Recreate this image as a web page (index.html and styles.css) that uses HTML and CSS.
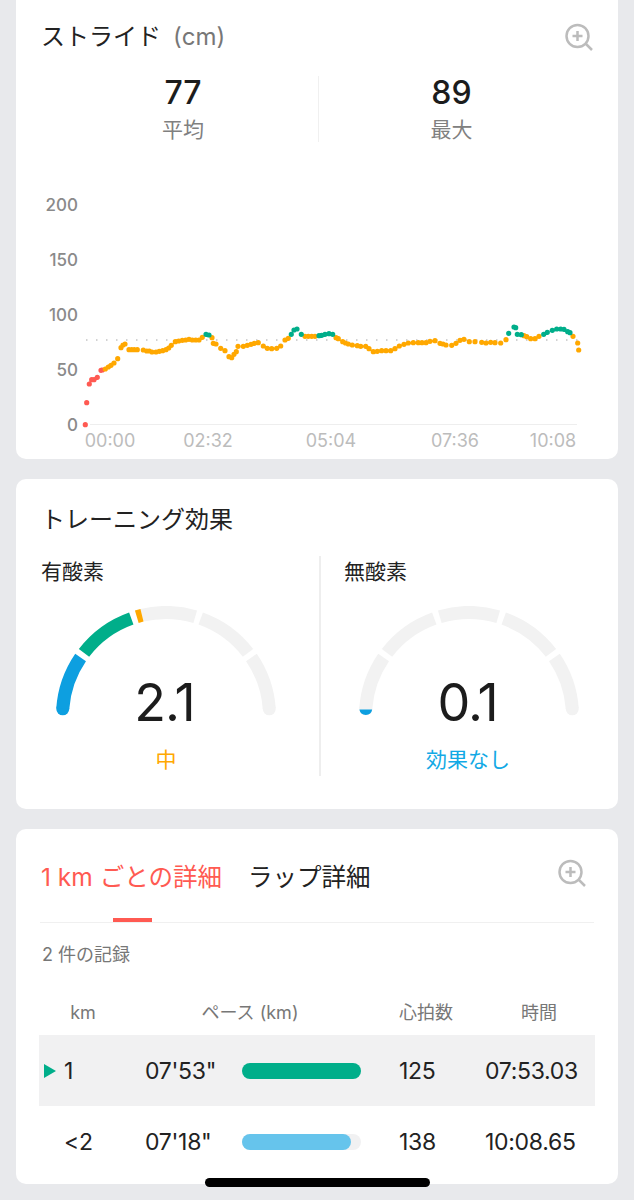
FILE: index.html
```html
<!DOCTYPE html>
<html lang="ja">
<head>
    <meta charset="UTF-8">
    <meta name="viewport" content="width=device-width, initial-scale=1.0">
    <title>ストライド</title>
    <link rel="stylesheet" href="styles.css">
</head>
<body>
    <div class="page">
        <section class="card card-stride">
            <div class="card-head">
                <h2 class="card-title">ストライド<span class="unit">(cm)</span></h2>
                <svg class="zoom-icon" viewBox="0 0 28 28"><circle cx="12.5" cy="13" r="11"/><path d="M7.5 13h10M12.5 8v10M21 21l6 6"/></svg>
            </div>
            <div class="stats">
                <div class="stat"><div class="stat-value">77</div><div class="stat-label">平均</div></div>
                <div class="stat stat-right"><div class="stat-value">89</div><div class="stat-label">最大</div></div>
            </div>
            <svg class="chart" viewBox="16 180 602 279">
                <g class="y-labels">
                    <text x="78" y="210">200</text>
                    <text x="78" y="265">150</text>
                    <text x="78" y="320">100</text>
                    <text x="78" y="375">50</text>
                    <text x="78" y="430">0</text>
                </g>
                <path class="axis" d="M90 423.5H577"/>
                <path class="avg" d="M86 339H578"/>
                <path class="dots red" d="M85.3 423.7h0M86.7 401.7h0M89.3 383h0M91.7 378.7h0M94 378.7h0M97.3 376.3h0M101 369.3h0M102.3 369h0"/>
                <path class="dots orange" d="M105.3 368h0M108.3 366h0M111 364.3h0M114 362h0M117.7 357.7h0M121 346.7h0M123 344h0M125 343h0M129 348.7h0M131.7 348.7h0M134.3 348.7h0M137.3 348.7h0M143.3 349h0M146.7 350h0M149.3 350h0M152 351h0M156 351h0M159.3 350.3h0M162.7 349.7h0M166 348.7h0M168.7 347h0M171.3 344.3h0M175.3 340.7h0M178.7 340h0M182.3 339.3h0M185.7 339h0M189 338.3h0M192.3 339h0M195.7 339h0M199 339h0M202.3 336.3h0M212 336.7h0M213.3 342.3h0M216 343h0M220.7 347.3h0M225 349.7h0M229 355.7h0M231.7 356.7h0M234 353.3h0M236.3 350.7h0M238 345.3h0M243.3 345.3h0M247.3 344.3h0M251 343.3h0M254.3 342.3h0M258.3 341.7h0M263.3 345h0M267.3 347.3h0M271.7 347.7h0M276.7 347.3h0M280.7 345h0M285 339h0M288.3 337.3h0M305 335.3h0M308.3 335.3h0M311.7 335.3h0M315 335.3h0M336 336.7h0M338.3 337.7h0M342.7 340.7h0M345.5 342h0M348.3 343h0M352.3 344h0M357.3 344.7h0M360.7 345.3h0M365.7 345.3h0M369 347.7h0M373.3 350.7h0M377.3 350.3h0M381.7 349.7h0M386 349.7h0M390.7 349.7h0M395 347.7h0M399.3 345h0M404 343.3h0M408.3 342h0M413.3 341.7h0M418.3 341.7h0M422 341.7h0M426 341.7h0M430 340.3h0M435 339.7h0M440 342.3h0M443 343h0M446 344h0M451.7 344.3h0M456 342.3h0M460 339.3h0M464 338.3h0M469.3 340.7h0M475 340.7h0M481.7 341.3h0M486 342h0M490.7 341.3h0M495 341.7h0M500.7 342h0M506 338.7h0M524 334.7h0M526.7 335.7h0M530.7 337.7h0M535 337.7h0M539 335.3h0M573 335.3h0M577.7 342h0M578.7 349h0"/>
                <path class="dots green" d="M206 333.3h0M209 334h0M291.3 333.3h0M294 329h0M297 328h0M301.3 333.3h0M319 334.7h0M321.7 334.3h0M325 333.3h0M329 332.7h0M332.7 333.3h0M508.7 332.3h0M514 326h0M515.7 326.7h0M517.3 333.3h0M521.3 333.7h0M543.7 333.3h0M547.3 331.3h0M552.3 329.3h0M556.7 328h0M560.7 328h0M564 328.3h0M567.7 330.7h0M570 331.7h0"/>
                <g class="x-labels">
                    <text x="110" y="446">00:00</text>
                    <text x="208" y="446">02:32</text>
                    <text x="331" y="446">05:04</text>
                    <text x="455" y="446">07:36</text>
                    <text x="553" y="446">10:08</text>
                </g>
            </svg>
        </section>

        <section class="card card-effect">
            <h2 class="card-title">トレーニング効果</h2>
            <div class="effects">
                <div class="effect">
                    <div class="effect-name">有酸素</div>
                    <div class="gauge">
                        <svg class="gauge-svg" viewBox="-110 -110 220 110">
                            <circle class="cap" cx="-103.25" cy="-7.22" r="6.5"/>
                            <path class="arc blue" d="M-103.25 -7.22A103.5 103.5 0 0 1 -85.4 -58.48"/>
                            <path class="arc green" d="M-82 -63.14A103.5 103.5 0 0 1 -34.72 -97.5"/>
                            <path class="arc track" d="M-24 -100.7A103.5 103.5 0 0 1 29.22 -99.29"/>
                            <path class="arc orange-arc" d="M-29.22 -99.29A103.5 103.5 0 0 1 -24 -100.7"/>
                            <path class="arc track" d="M34.72 -97.5A103.5 103.5 0 0 1 82 -63.14"/>
                            <path class="arc track" d="M85.4 -58.48A103.5 103.5 0 0 1 103.25 -7.22"/>
                            <circle class="cap-track" cx="103.25" cy="-7.22" r="6.5"/>
                        </svg>
                        <div class="gauge-value">2.1</div>
                    </div>
                    <div class="effect-level level-mid">中</div>
                </div>
                <div class="effect effect-right">
                    <div class="effect-name">無酸素</div>
                    <div class="gauge">
                        <svg class="gauge-svg" viewBox="-110 -110 220 110">
                            <circle class="cap-track" cx="-103.25" cy="-7.22" r="6.5"/>
                            <path class="arc track" d="M-103.25 -7.22A103.5 103.5 0 0 1 -85.4 -58.48"/>
                            <path class="arc track" d="M-82 -63.14A103.5 103.5 0 0 1 -34.72 -97.5"/>
                            <path class="arc track" d="M-29.22 -99.29A103.5 103.5 0 0 1 29.22 -99.29"/>
                            <path class="arc track" d="M34.72 -97.5A103.5 103.5 0 0 1 82 -63.14"/>
                            <path class="arc track" d="M85.4 -58.48A103.5 103.5 0 0 1 103.25 -7.22"/>
                            <circle class="cap-track" cx="103.25" cy="-7.22" r="6.5"/>
                            <path class="cap" d="M-109.6 -6.4A6.5 6.5 0 0 0 -96.8 -6.4Z"/>
                        </svg>
                        <div class="gauge-value">0.1</div>
                    </div>
                    <div class="effect-level level-none">効果なし</div>
                </div>
            </div>
        </section>

        <section class="card card-laps">
            <div class="tabs">
                <div class="tab tab-active">1 km ごとの詳細</div>
                <div class="tab">ラップ詳細</div>
                <svg class="zoom-icon" viewBox="0 0 28 28"><circle cx="12.5" cy="13" r="11"/><path d="M7.5 13h10M12.5 8v10M21 21l6 6"/></svg>
            </div>
            <div class="count">2 件の記録</div>
            <div class="table-head">
                <div>km</div>
                <div>ペース (km)</div>
                <div>心拍数</div>
                <div>時間</div>
            </div>
            <div class="lap lap-current">
                <div class="lap-km"><span class="marker"></span>1</div>
                <div>07'53"</div>
                <div class="bar"><div class="bar-fill bar-green" style="width: 100%"></div></div>
                <div>125</div>
                <div>07:53.03</div>
            </div>
            <div class="lap">
                <div class="lap-km">&lt;2</div>
                <div>07'18"</div>
                <div class="bar"><div class="bar-fill bar-blue" style="width: 92%"></div></div>
                <div>138</div>
                <div>10:08.65</div>
            </div>
        </section>
    </div>
    <div class="home-bar"></div>
</body>
</html>
```

FILE: styles.css
```css
* {
    box-sizing: border-box;
}

body {
    font-family: Inter, "Noto Sans CJK JP", sans-serif;
    background-color: #e8e9ec;
    color: #222;
    margin: 0;
    height: 1200px;
    overflow: hidden;
    position: relative;
}

.page {
    display: flex;
    flex-direction: column;
    gap: 20px;
    padding: 0 16px;
}

.card {
    background: white;
    border-radius: 10px;
}

.card-stride {
    margin-top: -10px;
    height: 469px;
    padding-top: 27px;
}

.card-effect {
    height: 330px;
    padding-top: 23px;
}

.card-laps {
    height: 355px;
    padding-top: 31px;
}

.card-head {
    display: flex;
    justify-content: space-between;
    align-items: center;
    padding: 0 25px;
    height: 40px;
}

.card-title {
    margin: 0;
    font-size: 24px;
    font-weight: 400;
    line-height: 36px;
    color: #222;
}

.card-effect .card-title {
    padding-left: 25px;
}

.unit {
    margin-left: 12px;
    font-size: 24px;
    color: #777;
}

.zoom-icon {
    width: 28px;
    height: 28px;
    fill: none;
    stroke: #bcbcbc;
    stroke-width: 2.5;
    flex: none;
}

.stats {
    display: flex;
    margin: 19px 30px 0 32px;
}

.stat {
    width: 270px;
    height: 66px;
    text-align: center;
}

.stat-right {
    width: 266px;
    border-left: 1px solid #f0f0f0;
}

.stat-value {
    font-size: 32px;
    line-height: 34px;
    font-weight: 500;
    color: #1c1c1c;
}

.stat-label {
    font-size: 21px;
    line-height: 40px;
    color: #808080;
}

.chart {
    display: block;
    width: 602px;
    height: 279px;
    margin-top: 39px;
}

.y-labels text {
    font-size: 17px;
    font-weight: 500;
    fill: #8a8a8a;
    text-anchor: end;
}

.x-labels text {
    font-size: 18px;
    fill: #bcbcbc;
    text-anchor: middle;
}

.axis {
    stroke: #eeeeee;
    stroke-width: 1;
}

.avg {
    stroke: #c4c4c4;
    stroke-width: 1.5;
    stroke-dasharray: 1.5 8.5;
}

.dots {
    fill: none;
    stroke-width: 5.2;
    stroke-linecap: round;
}

.red { stroke: #ff5a52; }
.orange { stroke: #ffa800; }
.green { stroke: #00ae8a; }

.effects {
    display: flex;
    margin-top: 18px;
}

.effect {
    width: 303px;
    height: 220px;
    padding-left: 25px;
    position: relative;
}

.effect-right {
    width: 299px;
    border-left: 2px solid #eeeeee;
    padding-left: 23px;
}

.effect-name {
    font-size: 21px;
    line-height: 32px;
}

.gauge {
    position: relative;
    width: 220px;
    margin: 18px 0 0 15px;
}

.gauge-svg {
    display: block;
    width: 220px;
    height: 110px;
}

.arc {
    fill: none;
    stroke-width: 13;
}

.arc.blue { stroke: #0d9fe0; }
.arc.green { stroke: #00ae8a; }
.orange-arc { stroke: #ffa800; }
.track { stroke: #f2f2f2; }
.cap { fill: #0d9fe0; }
.cap-track { fill: #f2f2f2; }

.gauge-value {
    position: absolute;
    left: 0;
    right: 3px;
    bottom: -15px;
    text-align: center;
    font-size: 52px;
    line-height: 56px;
    letter-spacing: -1px;
    color: #1c1c1c;
}

.effect-level {
    width: 220px;
    margin: 29px 0 0 15px;
    text-align: center;
    font-size: 21px;
    line-height: 30px;
}

.effect-right .effect-level {
    margin-left: 14px;
}

.level-mid { color: #ffa800; }
.level-none { color: #12a9e5; }

.tabs {
    display: flex;
    align-items: center;
    margin: 0 24px;
    height: 63px;
    border-bottom: 1px solid #f0f0f0;
    position: relative;
    gap: 26px;
    padding: 0 0 28px 1px;
}

.tab {
    font-size: 24.5px;
    line-height: 36px;
    color: #222;
}

.tab-active {
    color: #ff5a52;
}

.tab-active::after {
    content: "";
    position: absolute;
    left: 73px;
    bottom: 0;
    width: 39px;
    height: 4px;
    background: #ff5a52;
}

.tabs .zoom-icon {
    margin-left: auto;
    margin-right: 8px;
    margin-top: -9px;
}

.count {
    margin: 18px 0 0 26px;
    font-size: 18px;
    line-height: 28px;
    color: #777;
}

.table-head {
    display: grid;
    grid-template-columns: 88px 246px 106px 120px;
    margin: 30px 23px 0;
    height: 36px;
    text-align: center;
    font-size: 18px;
    line-height: 28px;
    color: #777;
}

.lap {
    display: grid;
    grid-template-columns: 106px 97px 119px 38px 86px 110px;
    margin: 0 23px;
    height: 71px;
    align-items: center;
    font-size: 23px;
    color: #222;
    letter-spacing: -0.3px;
}

.lap > :nth-child(4) {
    grid-column: 5;
}

.lap-current {
    background: #f1f1f2;
}

.lap-km {
    padding-left: 25px;
    position: relative;
}

.marker {
    position: absolute;
    left: 5px;
    top: 50%;
    margin-top: -7px;
    border-left: 12px solid #00ae8a;
    border-top: 7px solid transparent;
    border-bottom: 7px solid transparent;
}

.bar {
    height: 16px;
    background: #f1f1f2;
    border-radius: 8px;
}

.bar-fill {
    height: 16px;
    border-radius: 8px;
}

.bar-green { background: #00ae8a; }
.bar-blue { background: #66c4ec; }

.home-bar {
    position: absolute;
    left: 205px;
    top: 1178px;
    width: 225px;
    height: 9px;
    background: black;
    border-radius: 5px;
}
```
